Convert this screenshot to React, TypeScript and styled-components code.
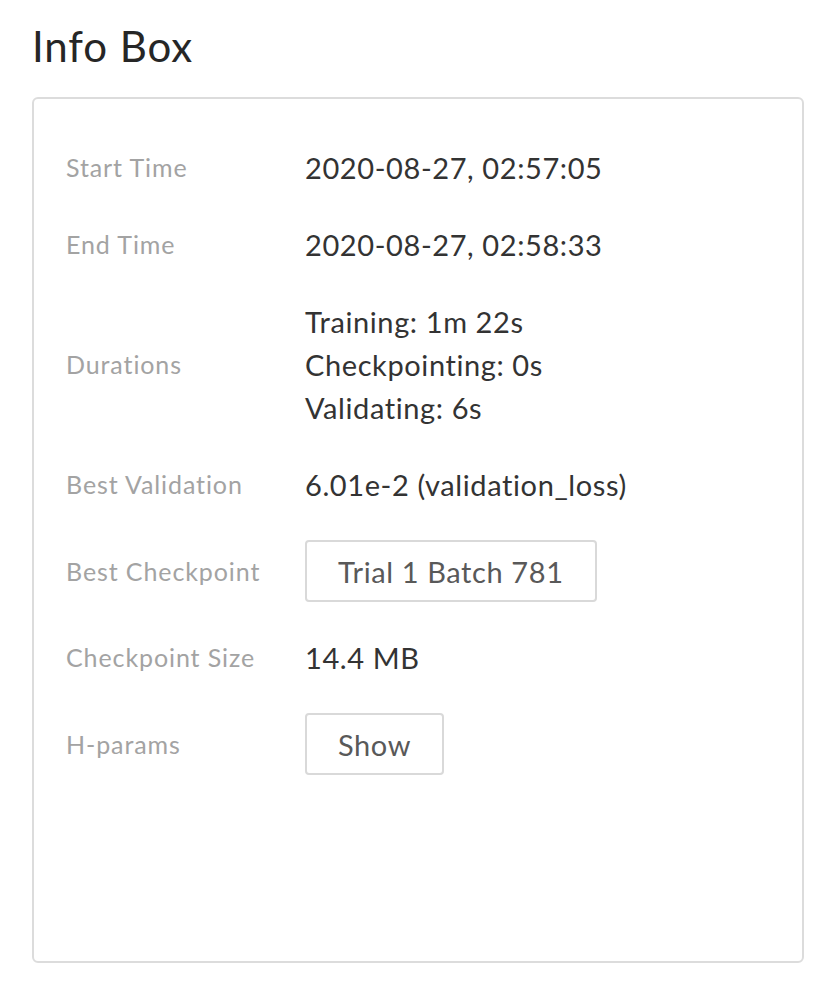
import styled, { createGlobalStyle } from "styled-components";

const GlobalStyle = createGlobalStyle`
  html, body {
    margin: 0;
    padding: 0;
    background: #ffffff;
  }
  body {
    font-family: Lato, "Open Sans", sans-serif;
  }
`;

const Page = styled.div`
  padding: 22px 32px 0;
  width: 772px;
`;

const Title = styled.h1`
  margin: 0 0 27px;
  font-size: 42px;
  line-height: 48px;
  letter-spacing: 0.9px;
  font-weight: 400;
  color: #262626;
`;

const Box = styled.div`
  box-sizing: border-box;
  height: 866px;
  border: 2px solid #dcdcdc;
  border-radius: 6px;
  padding: 30px 32px;
`;

const Table = styled.table`
  border-collapse: collapse;
`;

const Row = styled.tr``;

const Label = styled.th`
  width: 239px;
  padding: 17px 0;
  text-align: left;
  vertical-align: middle;
  font-size: 25px;
  line-height: 43px;
  letter-spacing: 0.9px;
  font-weight: 400;
  color: #a3a3a3;
  white-space: nowrap;
`;

const Value = styled.td`
  padding: 17px 0;
  vertical-align: middle;
  font-size: 29px;
  line-height: 43px;
  letter-spacing: 0.6px;
  color: #333333;
`;

const Line = styled.div``;

const Button = styled.button`
  box-sizing: border-box;
  height: 62px;
  padding: 0 31px;
  border: 2px solid #d9d9d9;
  border-radius: 4px;
  background: #ffffff;
  font-family: inherit;
  font-size: 29px;
  letter-spacing: 0.6px;
  color: #595959;
  cursor: pointer;
`;

type Item = { label: string; value: React.ReactNode };

const items: Item[] = [
  { label: "Start Time", value: "2020-08-27, 02:57:05" },
  { label: "End Time", value: "2020-08-27, 02:58:33" },
  {
    label: "Durations",
    value: (
      <>
        <Line>Training: 1m 22s</Line>
        <Line>Checkpointing: 0s</Line>
        <Line>Validating: 6s</Line>
      </>
    ),
  },
  { label: "Best Validation", value: "6.01e-2 (validation_loss)" },
  { label: "Best Checkpoint", value: <Button>Trial 1 Batch 781</Button> },
  { label: "Checkpoint Size", value: "14.4 MB" },
  { label: "H-params", value: <Button>Show</Button> },
];

export default function App() {
  return (
    <>
      <GlobalStyle />
      <Page>
        <Title>Info Box</Title>
        <Box>
          <Table>
            <tbody>
              {items.map((item) => (
                <Row key={item.label}>
                  <Label>{item.label}</Label>
                  <Value>{item.value}</Value>
                </Row>
              ))}
            </tbody>
          </Table>
        </Box>
      </Page>
    </>
  );
}
